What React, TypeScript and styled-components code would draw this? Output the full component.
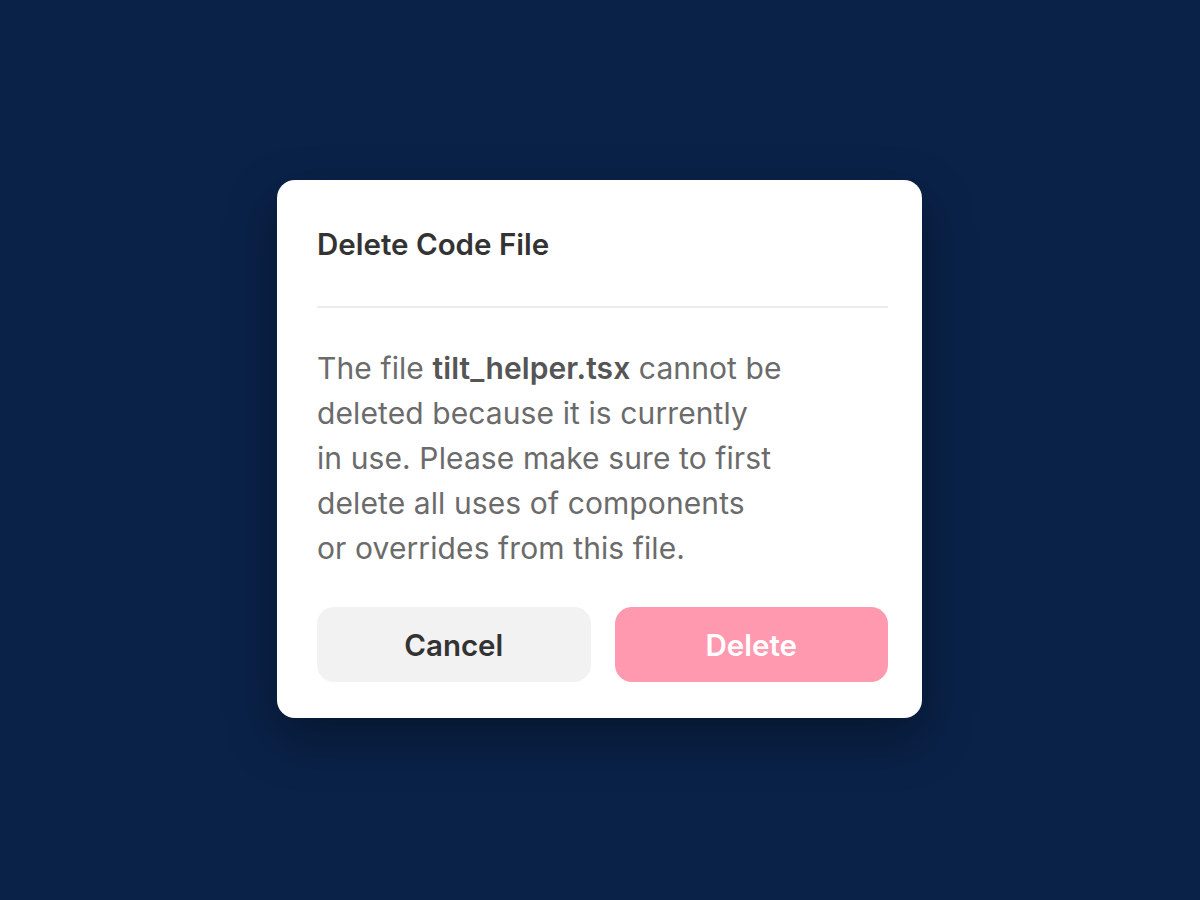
import React from "react";
import styled, { createGlobalStyle } from "styled-components";

const GlobalStyle = createGlobalStyle`
    html, body {
        margin: 0;
        padding: 0;
        background: #0a2248;
        font-family: Inter, "Noto Sans", sans-serif;
    }
`;

const Screen = styled.div`
    width: 1200px;
    height: 900px;
    display: flex;
    align-items: center;
    justify-content: center;
`;

const Dialog = styled.div`
    width: 645px;
    box-sizing: border-box;
    padding: 40px 34px 36px 40px;
    background: #ffffff;
    border-radius: 18px;
    box-shadow: 0 20px 50px rgba(0, 0, 0, 0.35);
    margin: -2px 1px 0 0;
`;

const Title = styled.h2`
    margin: 0;
    font-size: 29.5px;
    line-height: 48px;
    font-weight: 600;
    color: #333333;
`;

const Divider = styled.hr`
    margin: 38px 0 38px;
    border: none;
    height: 2px;
    background: #ececec;
`;

const Message = styled.p`
    margin: 0;
    font-size: 30px;
    line-height: 45px;
    letter-spacing: 0.1px;
    color: #6b6b6b;

    b {
        font-weight: 600;
        color: #555555;
    }
`;

const Actions = styled.div`
    display: grid;
    grid-template-columns: 1fr 1fr;
    gap: 24px;
    margin-top: 36px;
`;

const Button = styled.button<{ $danger?: boolean }>`
    height: 75px;
    border: none;
    border-radius: 17px;
    font-family: inherit;
    font-size: 29.5px;
    font-weight: 600;
    cursor: pointer;
    background: ${(p) => (p.$danger ? "#ff99b0" : "#f2f2f2")};
    color: ${(p) => (p.$danger ? "#ffffff" : "#333333")};
`;

export default function App() {
    return (
        <>
            <GlobalStyle />
            <Screen>
                <Dialog>
                    <Title>Delete Code File</Title>
                    <Divider />
                    <Message>
                        The file <b>tilt_helper.tsx</b> cannot be
                        <br />
                        deleted because it is currently
                        <br />
                        in use. Please make sure to first
                        <br />
                        delete all uses of components
                        <br />
                        or overrides from this file.
                    </Message>
                    <Actions>
                        <Button>Cancel</Button>
                        <Button $danger>Delete</Button>
                    </Actions>
                </Dialog>
            </Screen>
        </>
    );
}
